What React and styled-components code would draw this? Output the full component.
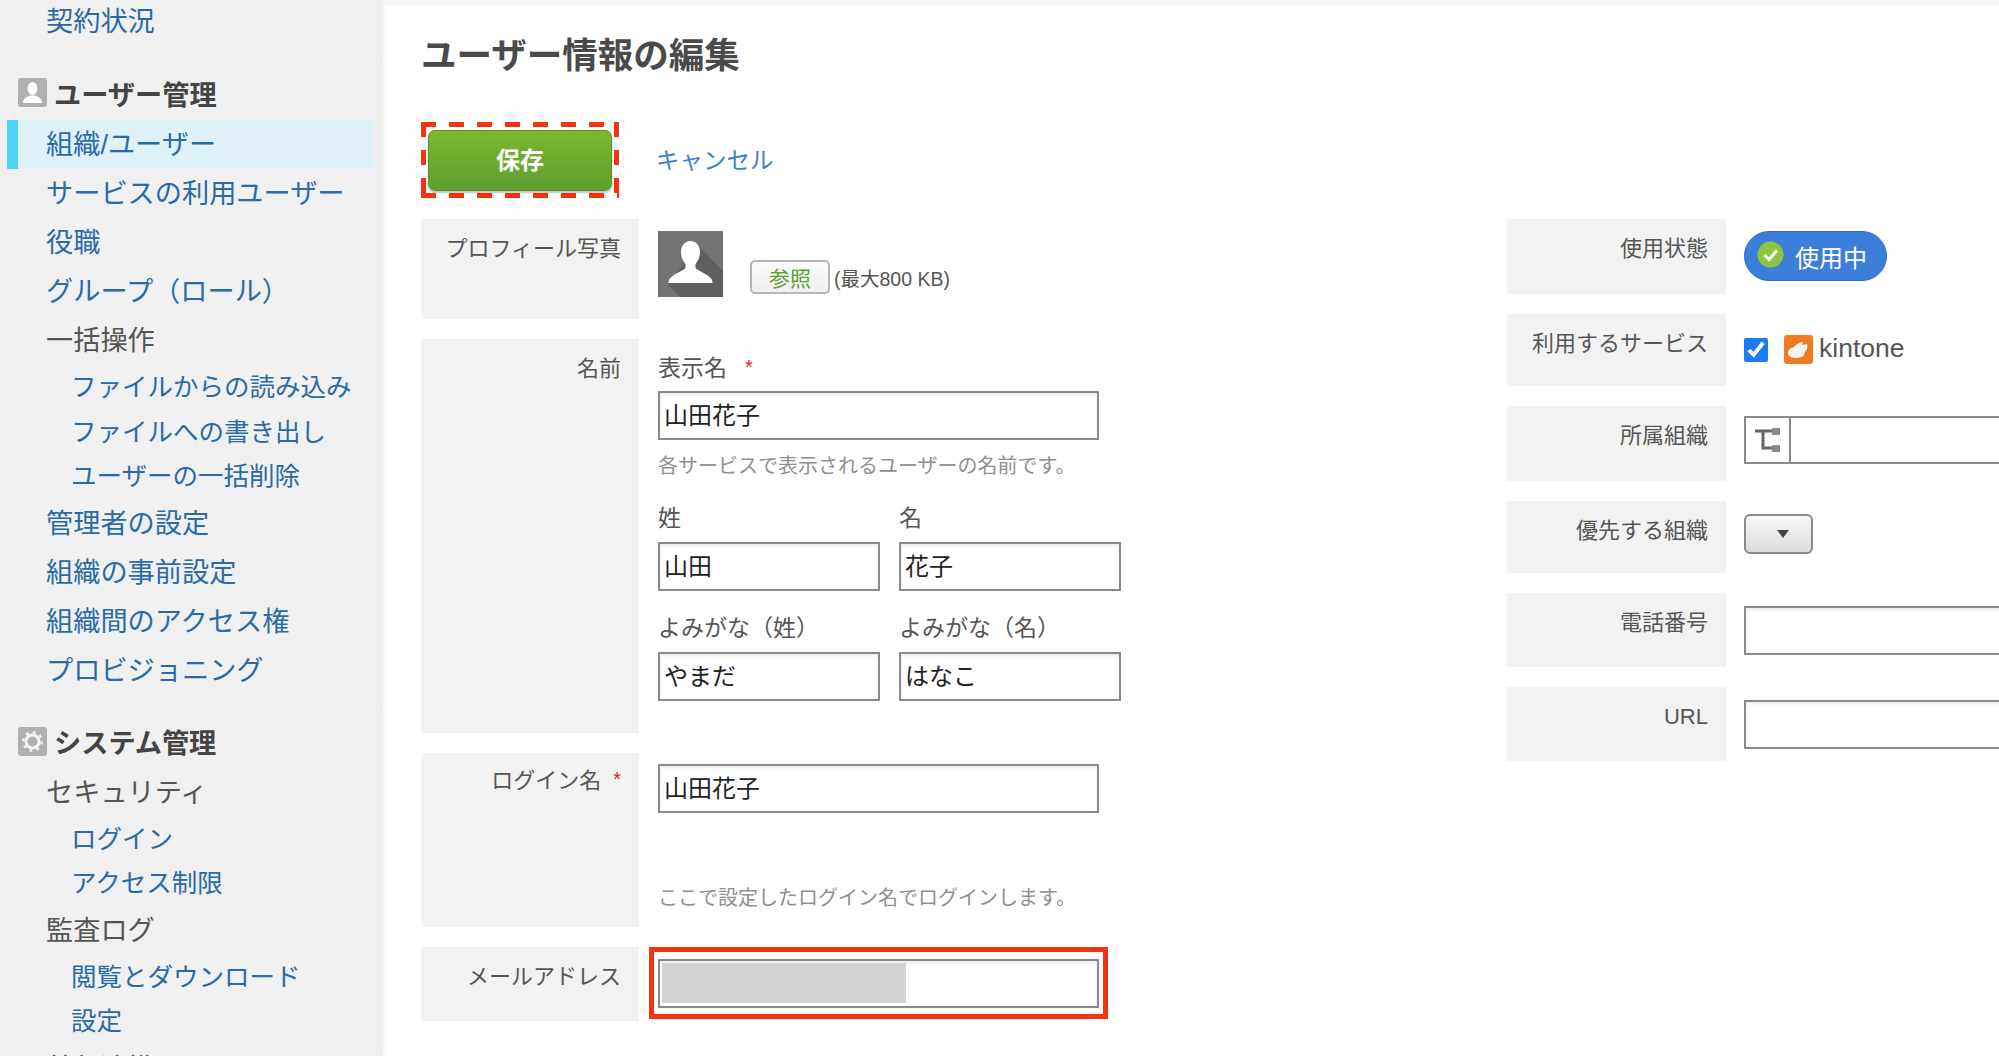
import React from 'react'
import styled, { createGlobalStyle } from 'styled-components'

const GlobalStyle = createGlobalStyle`
  html, body {
    margin: 0;
    height: 100%;
    overflow: hidden;
    background: #fff;
  }
  body {
    font-family: "Liberation Sans", "Noto Sans CJK JP", sans-serif;
    color: #555;
  }
  * {
    box-sizing: border-box;
  }
`

const Page = styled.div`
  display: flex;
  width: 1999px;
  height: 1056px;
  overflow: hidden;
`

const Sidebar = styled.nav`
  flex: 0 0 383px;
  height: 1056px;
  overflow: hidden;
  background: #f0f0f0;
  box-shadow: 1px 0 4px rgba(0, 0, 0, 0.06);
`

const NavSection = styled.div`
  padding-bottom: ${(props) => props.$bottom || 10}px;
  border-bottom: ${(props) => (props.$last ? 'none' : '1px solid #ebebeb')};
`

const NavHeader = styled.div`
  display: flex;
  align-items: center;
  height: 49px;
  margin: ${(props) => props.$top || 10}px 0 ${(props) => props.$gap || 3}px;
  padding-left: 18px;
  font-size: 27.2px;
  font-weight: 700;
  color: #444;
`

const NavIcon = styled.svg`
  flex: 0 0 29px;
  width: 29px;
  height: 29px;
  margin: 0 7px 0 0;
`

const NavItem = styled.div`
  height: ${(props) => (props.$first ? 42 : 49)}px;
  line-height: ${(props) => (props.$first ? 44 : 49)}px;
  padding-left: 46px;
  font-size: 27.2px;
  white-space: nowrap;
  color: ${(props) => (props.$plain ? '#555' : '#2a6aa6')};
`

const NavItemActive = styled(NavItem)`
  margin: 0 10px 0 7px;
  padding-left: 28px;
  border-left: 11px solid #4fd4f5;
  background: #dff1f8;
`

const NavSubItem = styled.div`
  height: 44.5px;
  line-height: 44.5px;
  padding-left: 71px;
  font-size: 25.5px;
  white-space: nowrap;
  color: #2a6aa6;
`

const Main = styled.main`
  flex: 1;
  min-width: 0;
  overflow: hidden;
  padding-left: 38px;
  border-top: 5px solid #f6f6f6;
`

const Title = styled.h1`
  margin: 26px 0 0;
  height: 50px;
  line-height: 50px;
  font-size: 35.5px;
  font-weight: 700;
  color: #4a4a4a;
  white-space: nowrap;
`

const Toolbar = styled.div`
  display: flex;
  align-items: center;
  gap: 37px;
  margin-top: 41px;
`

const dash = '#f5340f'

// the reference's dashes are longer than a css dashed border gives
const DashedFrame = styled.div`
  display: flex;
  align-items: center;
  justify-content: center;
  width: 198px;
  height: 76px;
  background:
    repeating-linear-gradient(90deg, ${dash} 0 15px, transparent 15px 28px) top / 100% 5px no-repeat,
    repeating-linear-gradient(90deg, ${dash} 0 15px, transparent 15px 28px) bottom / 100% 5px no-repeat,
    repeating-linear-gradient(180deg, ${dash} 0 15px, transparent 15px 28px) left / 5px 100% no-repeat,
    repeating-linear-gradient(180deg, ${dash} 0 15px, transparent 15px 28px) right / 5px 100% no-repeat;
`

const SaveButton = styled.button`
  display: block;
  width: 184px;
  height: 61px;
  padding: 0 0 3px;
  border: 1px solid #5c8f27;
  border-radius: 7px;
  background: linear-gradient(#7ab82e, #5f9e30);
  box-shadow: 0 2px 2px rgba(0, 0, 0, 0.25);
  color: #fff;
  font-family: inherit;
  font-size: 24px;
  font-weight: 700;
`

const CancelLink = styled.a`
  margin-top: -3px;
  font-size: 23.5px;
  color: #3a82cc;
`

const Columns = styled.div`
  display: flex;
  margin-top: 21px;
`

const LeftColumn = styled.div`
  flex: 0 0 1086px;
  display: flex;
  flex-direction: column;
  gap: 20px;
`

const RightColumn = styled.div`
  flex: 0 0 auto;
  display: flex;
  flex-direction: column;
  gap: 20px;
`

const FormRow = styled.div`
  display: flex;
  height: ${(props) => props.$height}px;
`

const LabelCell = styled.div`
  flex: 0 0 ${(props) => props.$width}px;
  padding: ${(props) => props.$top || 15}px 18px 0 0;
  background: #f2f2f2;
  text-align: right;
  font-size: 22px;
  line-height: 30px;
  color: #555;
  white-space: nowrap;
`

const Required = styled.span`
  margin-left: 18px;
  color: #d7282f;
  font-size: 20px;
  line-height: 0;
  vertical-align: 2px;
`

const LabelRequired = styled(Required)`
  margin: 0 0 0 12px;
`

const FieldCell = styled.div`
  padding: ${(props) => props.$top || 0}px 0 0 ${(props) => props.$left || 19}px;
`

const ProfileCell = styled(FieldCell)`
  display: flex;
  align-items: flex-start;
`

const UploadGroup = styled.div`
  display: flex;
  align-items: center;
  margin: 29px 0 0 27px;
`

const UploadButton = styled.button`
  width: 80px;
  height: 34px;
  padding: 0;
  border: 2px solid #b5b5b5;
  border-radius: 5px;
  background: linear-gradient(#fbfbfb, #f0f0f0);
  color: #5e9e2e;
  font-family: inherit;
  font-size: 21px;
`

const UploadNote = styled.span`
  margin-left: 4px;
  font-size: 19.5px;
  color: #555;
`

const FieldLabel = styled.div`
  margin-top: ${(props) => props.$top || 0}px;
  font-size: 23px;
  line-height: 30px;
  color: #555;
`

const Hint = styled.div`
  margin-top: ${(props) => props.$top}px;
  font-size: 20px;
  line-height: 30px;
  color: #8f8f8f;
  white-space: nowrap;
`

const TextInput = styled.input`
  display: block;
  width: ${(props) => props.$width}px;
  height: 49px;
  margin-top: ${(props) => props.$top || 0}px;
  padding: 0 4px 4px;
  border: 2px solid #8a8a8a;
  border-radius: 0;
  outline: none;
  background: #fff;
  box-shadow: inset 0 2px 3px rgba(0, 0, 0, 0.08);
  font-family: inherit;
  font-size: 24px;
  color: #222;
`

const InputPair = styled.div`
  display: flex;
  gap: 19px;
`

const PairColumn = styled.div`
  width: 222px;
`

const RedFrame = styled.div`
  position: relative;
  width: 459px;
  height: 72px;
  margin: 0 0 0 -9px;
  padding: 7px 4px 0;
  border: 5px solid #f5340f;
`

const MaskedValue = styled.div`
  position: absolute;
  top: 11px;
  left: 8px;
  width: 244px;
  height: 40px;
  background: #d3d3d3;
`

const StatusPill = styled.div`
  display: flex;
  align-items: center;
  width: 143px;
  height: 50px;
  padding-left: 12px;
  border: 1px solid #2a6fd6;
  border-radius: 25px;
  background: #3b7fdb;
  color: #fff;
  font-size: 24px;
`

const StatusIcon = styled.svg`
  flex: 0 0 27px;
  width: 27px;
  height: 27px;
  margin: -3px 11px 0 0;
`

const ServiceRow = styled.label`
  display: flex;
  align-items: center;
`

const ServiceCheck = styled.input`
  width: 24px;
  height: 24px;
  margin: 0 16px 0 0;
  accent-color: #1a7cf0;
`

const ServiceIcon = styled.svg`
  width: 29px;
  height: 29px;
  margin-right: 6px;
`

const ServiceName = styled.span`
  margin-top: -2px;
  font-size: 26.5px;
  color: #555;
`

const OrgField = styled.div`
  display: flex;
  width: 300px;
  height: 48px;
  border: 2px solid #8a8a8a;
`

const OrgIconBox = styled.div`
  display: flex;
  flex: 0 0 45px;
  align-items: center;
  justify-content: center;
  border-right: 2px solid #8a8a8a;
`

const DropButton = styled.button`
  display: flex;
  align-items: center;
  justify-content: center;
  width: 69px;
  height: 40px;
  padding: 0;
  border: 2px solid #8a8a8a;
  border-radius: 6px;
  background: linear-gradient(#f8f8f8, #dcdcdc);
`

const DropArrow = styled.span`
  margin-left: 8px;
  border-top: 8px solid #444;
  border-left: 6px solid transparent;
  border-right: 6px solid transparent;
`

const UserGlyph = () => (
  <NavIcon viewBox="0 0 29 29">
    <rect width="29" height="29" rx="3" fill="#b0b0b0" />
    <ellipse cx="14.5" cy="10.5" rx="5" ry="6.5" fill="#fff" />
    <path d="M5 25c0-5 4-6 7-7.5h5c3 1.500 7 2.500 7 7.500z" fill="#fff" />
  </NavIcon>
)

const GearGlyph = () => (
  <NavIcon viewBox="0 0 29 29">
    <rect width="29" height="29" rx="3" fill="#b0b0b0" />
    <circle cx="14.500" cy="14.500" r="6.500" fill="none" stroke="#f4f4f4" strokeWidth="3" />
    <circle
      cx="14.500"
      cy="14.500"
      r="9.200"
      fill="none"
      stroke="#f4f4f4"
      strokeWidth="2.500"
      strokeDasharray="3 4.220"
    />
  </NavIcon>
)

const ProfilePhoto = () => (
  <svg width="65" height="66" viewBox="0 0 65 66">
    <rect width="65" height="66" fill="#737373" />
    <path d="M40 14L65 40V66H22L10 54z" fill="#5f5f5f" />
    <path
      d="M32.500 10c-6 0-9.500 5-9.500 11 0 5 2 9 4.500 12v4c-3 3-12 6-16 11-1 1.500-1 4-1 4h44s0-2.500-1-4c-4-5-13-8-16-11v-4c2.500-3 4.500-7 4.500-12 0-6-3.500-11-9.500-11z"
      fill="#fff"
    />
  </svg>
)

const navUsers = [
  { text: 'サービスの利用ユーザー' },
  { text: '役職' },
  { text: 'グループ（ロール）' },
  { text: '一括操作', plain: true },
  { text: 'ファイルからの読み込み', sub: true },
  { text: 'ファイルへの書き出し', sub: true },
  { text: 'ユーザーの一括削除', sub: true },
  { text: '管理者の設定' },
  { text: '組織の事前設定' },
  { text: '組織間のアクセス権' },
  { text: 'プロビジョニング' },
]

const navSystem = [
  { text: 'セキュリティ', plain: true },
  { text: 'ログイン', sub: true },
  { text: 'アクセス制限', sub: true },
  { text: '監査ログ', plain: true },
  { text: '閲覧とダウンロード', sub: true },
  { text: '設定', sub: true },
  { text: '外部連携', plain: true },
]

const renderNav = (items) => items.map((item) => (
  item.sub
    ? <NavSubItem key={item.text}>{item.text}</NavSubItem>
    : <NavItem key={item.text} $plain={item.plain}>{item.text}</NavItem>
))

const App = () => (
  <Page>
    <GlobalStyle />
    <Sidebar>
      <NavSection $bottom={15}>
        <NavItem $first>契約状況</NavItem>
      </NavSection>
      <NavSection>
        <NavHeader><UserGlyph />ユーザー管理</NavHeader>
        <NavItemActive>組織/ユーザー</NavItemActive>
        {renderNav(navUsers)}
      </NavSection>
      <NavSection $last>
        <NavHeader $top={11} $gap={2}><GearGlyph />システム管理</NavHeader>
        {renderNav(navSystem)}
      </NavSection>
    </Sidebar>

    <Main>
      <Title>ユーザー情報の編集</Title>
      <Toolbar>
        <DashedFrame>
          <SaveButton>保存</SaveButton>
        </DashedFrame>
        <CancelLink>キャンセル</CancelLink>
      </Toolbar>

      <Columns>
        <LeftColumn>
          <FormRow $height={100}>
            <LabelCell $width={218}>プロフィール写真</LabelCell>
            <ProfileCell $top={12}>
              <ProfilePhoto />
              <UploadGroup>
                <UploadButton>参照</UploadButton>
                <UploadNote>(最大800 KB)</UploadNote>
              </UploadGroup>
            </ProfileCell>
          </FormRow>

          <FormRow $height={394}>
            <LabelCell $width={218}>名前</LabelCell>
            <FieldCell $top={14}>
              <FieldLabel>表示名<Required>*</Required></FieldLabel>
              <TextInput $width={441} $top={8} defaultValue="山田花子" />
              <Hint $top={11}>各サービスで表示されるユーザーの名前です。</Hint>
              <InputPair>
                <PairColumn>
                  <FieldLabel $top={22}>姓</FieldLabel>
                  <TextInput $width={222} $top={9} defaultValue="山田" />
                </PairColumn>
                <PairColumn>
                  <FieldLabel $top={22}>名</FieldLabel>
                  <TextInput $width={222} $top={9} defaultValue="花子" />
                </PairColumn>
              </InputPair>
              <InputPair>
                <PairColumn>
                  <FieldLabel $top={22}>よみがな（姓）</FieldLabel>
                  <TextInput $width={222} $top={9} defaultValue="やまだ" />
                </PairColumn>
                <PairColumn>
                  <FieldLabel $top={22}>よみがな（名）</FieldLabel>
                  <TextInput $width={222} $top={9} defaultValue="はなこ" />
                </PairColumn>
              </InputPair>
            </FieldCell>
          </FormRow>

          <FormRow $height={174}>
            <LabelCell $width={218} $top={13}>ログイン名<LabelRequired>*</LabelRequired></LabelCell>
            <FieldCell $top={11}>
              <TextInput $width={441} defaultValue="山田花子" />
              <Hint $top={70}>ここで設定したログイン名でログインします。</Hint>
            </FieldCell>
          </FormRow>

          <FormRow $height={74}>
            <LabelCell $width={218}>メールアドレス</LabelCell>
            <FieldCell>
              <RedFrame>
                <TextInput $width={441} />
                <MaskedValue />
              </RedFrame>
            </FieldCell>
          </FormRow>
        </LeftColumn>

        <RightColumn>
          <FormRow $height={75}>
            <LabelCell $width={219}>使用状態</LabelCell>
            <FieldCell $left={18} $top={12}>
              <StatusPill>
                <StatusIcon viewBox="0 0 27 27">
                  <circle cx="13.500" cy="13.500" r="13" fill="#8cc63f" />
                  <path d="M7.500 14l4.500 4.500 8-9" fill="none" stroke="#fff" strokeWidth="3" />
                </StatusIcon>
                使用中
              </StatusPill>
            </FieldCell>
          </FormRow>

          <FormRow $height={72}>
            <LabelCell $width={219}>利用するサービス</LabelCell>
            <FieldCell $left={18} $top={21}>
              <ServiceRow>
                <ServiceCheck type="checkbox" defaultChecked />
                <ServiceIcon viewBox="0 0 29 29">
                  <rect width="29" height="29" rx="3" fill="#ee7a22" />
                  <path
                    d="M4 18c0-4 3-5 6-6 2-3 6-5 9-5l-1 3 5-1c1 3 0 6-2 8 0 3-3 6-8 6s-9-1-9-5z"
                    fill="#f6f3ee"
                  />
                </ServiceIcon>
                <ServiceName>kintone</ServiceName>
              </ServiceRow>
            </FieldCell>
          </FormRow>

          <FormRow $height={75}>
            <LabelCell $width={219}>所属組織</LabelCell>
            <FieldCell $left={18} $top={10}>
              <OrgField>
                <OrgIconBox>
                  <svg width="27" height="25" viewBox="0 0 27 25">
                    <path d="M1 3h18M9 3v17h10" fill="none" stroke="#666" strokeWidth="3" />
                    <rect x="18" y="0" width="8" height="7" rx="1" fill="#888" />
                    <rect x="18" y="17" width="8" height="7" rx="1" fill="#888" />
                  </svg>
                </OrgIconBox>
              </OrgField>
            </FieldCell>
          </FormRow>

          <FormRow $height={72}>
            <LabelCell $width={219}>優先する組織</LabelCell>
            <FieldCell $left={18} $top={13}>
              <DropButton><DropArrow /></DropButton>
            </FieldCell>
          </FormRow>

          <FormRow $height={74}>
            <LabelCell $width={219}>電話番号</LabelCell>
            <FieldCell $left={18} $top={13}>
              <TextInput $width={300} />
            </FieldCell>
          </FormRow>

          <FormRow $height={74}>
            <LabelCell $width={219}>URL</LabelCell>
            <FieldCell $left={18} $top={13}>
              <TextInput $width={300} />
            </FieldCell>
          </FormRow>
        </RightColumn>
      </Columns>
    </Main>
  </Page>
)

export default App
